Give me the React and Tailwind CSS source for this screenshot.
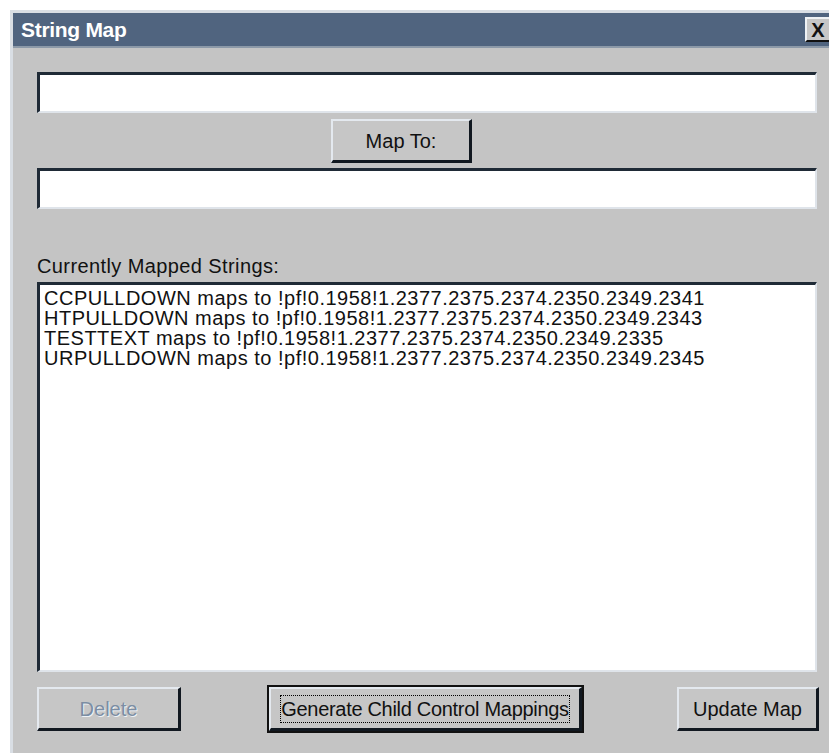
import React from 'react';

const mappings = [
  'CCPULLDOWN maps to !pf!0.1958!1.2377.2375.2374.2350.2349.2341',
  'HTPULLDOWN maps to !pf!0.1958!1.2377.2375.2374.2350.2349.2343',
  'TESTTEXT maps to !pf!0.1958!1.2377.2375.2374.2350.2349.2335',
  'URPULLDOWN maps to !pf!0.1958!1.2377.2375.2374.2350.2349.2345',
];

// classic sunken edit field
function Field() {
  return (
    <div className="h-[41px] bg-white border-t-[3px] border-l-[3px] border-t-[#1f2a36] border-l-[#1f2a36] border-b-2 border-r-2 border-b-[#dfe4ea] border-r-[#dfe4ea]" />
  );
}

// raised push button
function Btn({ children, className = '', disabled, focused }) {
  return (
    <button
      className={`h-[44px] bg-[#c6c6c6] border-t-2 border-l-2 border-t-[#e4e9ef] border-l-[#e4e9ef] border-b-[3px] border-r-[3px] border-b-[#111820] border-r-[#111820] flex items-center justify-center whitespace-nowrap ${
        focused ? 'outline-2 outline-[#111]' : ''
      } ${className}`}
    >
      {focused ? (
        <span className="border border-dotted border-black leading-[26px] text-[20px] tracking-[-0.3px]">{children}</span>
      ) : (
        <span
          className={disabled ? 'text-[#7b8da3]' : 'text-[#111]'}
          style={disabled ? { textShadow: '1px 1px 0 #eef2f6' } : undefined}
        >
          {children}
        </span>
      )}
    </button>
  );
}

export default function App() {
  return (
    <div
      className="min-h-screen bg-white pt-[10px] pl-[10px] text-[20px] text-[#111]"
      style={{ fontFamily: '"Liberation Sans", Arial, sans-serif' }}
    >
      <div className="h-[743px] bg-[#c4c4c4] border-l-[3px] border-t-[3px] border-[#d9dee4] flex flex-col">
        {/* title bar */}
        <div className="h-[35px] bg-[#50647f] flex items-center justify-between pl-[8px] border-b-2 border-b-[#8c99a8]">
          <span className="text-white font-bold text-[21px] tracking-[-0.3px]">String Map</span>
          <div className="w-[24px] h-[25px] bg-[#c6c6c6] border-t-2 border-l-2 border-[#eef1f4] border-b-2 border-b-[#111] flex items-center justify-center font-bold text-[20px] leading-none">
            X
          </div>
        </div>

        <div className="flex-1 flex flex-col pl-[24px] pr-[12px] pt-[24px] pb-[20px]">
          <Field />
          <Btn className="w-[141px] ml-[294px] mt-[6px] h-[43px]">Map To:</Btn>
          <div className="mt-[5px]">
            <Field />
          </div>

          <div className="mt-[46px] leading-[22px] tracking-[0.4px]">Currently Mapped Strings:</div>

          <div className="mt-[5px] h-[390px] bg-white border-t-[3px] border-l-[3px] border-t-[#1f2a36] border-l-[#1f2a36] border-b-2 border-r-2 border-b-[#dfe4ea] border-r-[#dfe4ea] pl-[4px] pt-[3px]">
            {mappings.map((m) => (
              <div key={m} className="leading-[20px] whitespace-nowrap tracking-[0.5px]">
                {m}
              </div>
            ))}
          </div>

          <div className="mt-[15px] flex items-center">
            <Btn className="w-[144px]" disabled>
              Delete
            </Btn>
            <Btn className="w-[313px] ml-[88px]" focused>
              Generate Child Control Mappings
            </Btn>
            <Btn className="w-[142px] ml-auto -mr-[2px]">Update Map</Btn>
          </div>
        </div>
      </div>
    </div>
  );
}
